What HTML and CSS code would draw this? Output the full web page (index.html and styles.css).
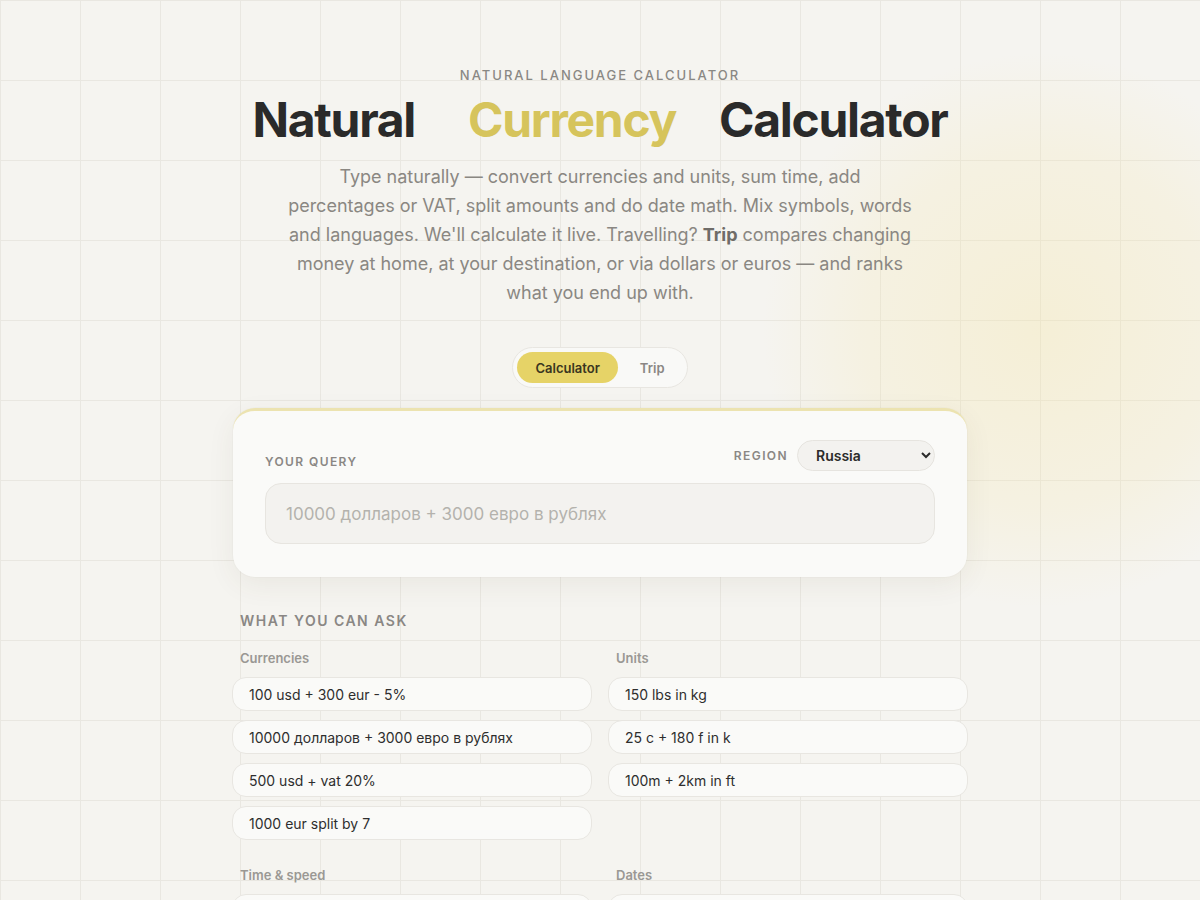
FILE: index.html
```html
<!DOCTYPE html>
<html lang="en">
<head>
<meta charset="utf-8">
<title>Natural Currency Calculator</title>
<link rel="stylesheet" href="styles.css">
</head>
<body>
<div class="glow"></div>
<main class="page">
  <header class="hero">
    <div class="eyebrow">NATURAL LANGUAGE CALCULATOR</div>
    <h1 class="title"><span class="w1">Natural</span><span class="accent">Currency</span><span class="w3">Calculator</span></h1>
    <p class="lead">Type naturally — convert currencies and units, sum time, add percentages or VAT, split amounts and do date math. Mix symbols, words and languages. We'll calculate it live. Travelling? <b>Trip</b> compares changing money at home, at your destination, or via dollars or euros — and ranks what you end up with.</p>
  </header>

  <nav class="tabs">
    <button class="tab active">Calculator</button>
    <button class="tab">Trip</button>
  </nav>

  <section class="card">
    <div class="card-head">
      <label class="label">YOUR QUERY</label>
      <div class="region">
        <span class="label">REGION</span>
        <select class="select"><option>Russia</option></select>
      </div>
    </div>
    <input class="query" type="text" placeholder="10000 долларов + 3000 евро в рублях">
  </section>

  <section class="examples">
    <h2 class="ex-title">WHAT YOU CAN ASK</h2>
    <div class="ex-grid">
      <div class="group">
        <div class="group-label">Currencies</div>
        <div class="chip">100 usd + 300 eur - 5%</div>
        <div class="chip">10000 долларов + 3000 евро в рублях</div>
        <div class="chip">500 usd + vat 20%</div>
        <div class="chip">1000 eur split by 7</div>
      </div>
      <div class="group">
        <div class="group-label">Units</div>
        <div class="chip">150 lbs in kg</div>
        <div class="chip">25 c + 180 f in k</div>
        <div class="chip">100m + 2km in ft</div>
      </div>
      <div class="group">
        <div class="group-label">Time &amp; speed</div>
        <div class="chip">2h 30m + 45m</div>
        <div class="chip">100 km/h in mph</div>
      </div>
      <div class="group">
        <div class="group-label">Dates</div>
        <div class="chip">today + 30 days</div>
        <div class="chip">days until 31 dec</div>
      </div>
    </div>
  </section>
</main>
</body>
</html>
```

FILE: styles.css
```css
* { box-sizing: border-box; }
html { overflow: hidden; height: 900px; }
html, body { margin: 0; padding: 0; }
body {
  font-family: Inter, "Noto Sans", sans-serif;
  color: #2b2b2b;
  background-color: #f5f4f0;
  background-image:
    linear-gradient(to right, #e9e7e1 1px, transparent 1px),
    linear-gradient(to bottom, #e9e7e1 1px, transparent 1px);
  background-size: 80px 80px;
  height: 900px;
  overflow: hidden;
  position: relative;
}
.glow {
  position: absolute;
  left: 760px;
  top: 50px;
  width: 560px;
  height: 560px;
  border-radius: 50%;
  background: radial-gradient(circle, rgba(245,228,160,0.32) 0%, rgba(245,228,160,0.18) 45%, rgba(245,228,160,0) 70%);
  pointer-events: none;
}
.page {
  position: relative;
  width: 736px;
  margin: 0 auto;
  padding-top: 66px;
}
.hero { text-align: center; }
.eyebrow {
  font-size: 13px;
  letter-spacing: 2px;
  color: #8a8884;
  font-weight: 500;
  line-height: 18px;
}
.title {
  margin: 6px 0 0;
  display: flex;
  justify-content: center;
  font-size: 48px;
  font-weight: 700;
  letter-spacing: -1.3px;
  line-height: 60px;
  color: #2a2a2a;
}
.title .w1 { margin-right: 53px; }
.title .w3 { margin-left: 43px; }
.title .accent { color: #d6c45c; }
.lead {
  width: 632px;
  margin: 12px auto 0;
  font-size: 18px;
  line-height: 29px;
  color: #8a8782;
}
.lead b { color: #6f6c68; font-weight: 700; }
.tabs {
  display: flex;
  width: max-content;
  margin: 40px auto 0;
  padding: 4px;
  gap: 4px;
  border: 1px solid #e8e6e1;
  border-radius: 999px;
  background: #f9f9f7;
}
.tab {
  border: none;
  background: transparent;
  font-family: inherit;
  font-size: 13px;
  font-weight: 600;
  color: #8a8784;
  padding: 0 18px;
  height: 31px;
  border-radius: 999px;
}
.tab.active {
  background: #e6d367;
  color: #3a3520;
}
.card {
  margin: 20px 1px 0;
  background: #fafaf8;
  border-radius: 22px;
  border-top: 3px solid #ece3b0;
  padding: 29px 32px 33px;
  box-shadow: 0 8px 28px rgba(80, 70, 40, 0.07), 0 0 0 1px rgba(0,0,0,0.015);
}
.card-head {
  display: flex;
  justify-content: space-between;
  align-items: center;
}
.label {
  font-size: 12px;
  font-weight: 600;
  letter-spacing: 1.4px;
  color: #8a8784;
}
.card-head > .label { margin-top: 12px; }
.region {
  display: flex;
  align-items: center;
  gap: 9px;
}
.select {
  width: 138px;
  height: 31px;
  border-radius: 999px;
  border: 1px solid #e6e4df;
  background: #f3f2ef;
  font-family: inherit;
  font-size: 14px;
  font-weight: 600;
  color: #2b2b2b;
  padding: 0 10px 0 14px;
}
.query {
  display: block;
  width: 100%;
  height: 61px;
  margin-top: 12px;
  border: 1px solid #e7e5e0;
  border-radius: 16px;
  background: #f3f2ef;
  font-family: inherit;
  font-size: 17px;
  padding: 0 20px;
  color: #2b2b2b;
}
.query::placeholder { color: #b4b2ad; }
.examples { margin-top: 35px; }
.ex-title {
  margin: 0 0 0 8px;
  font-size: 14px;
  font-weight: 600;
  letter-spacing: 1.5px;
  color: #8a8784;
  line-height: 18px;
}
.ex-grid {
  display: grid;
  grid-template-columns: 360px 360px;
  column-gap: 16px;
  row-gap: 27px;
  margin-top: 20px;
}
.group {
  display: flex;
  flex-direction: column;
  gap: 9px;
}
.group-label {
  margin: 0 0 2px 8px;
  font-size: 13px;
  font-weight: 600;
  color: #9a9894;
  line-height: 16px;
}
.chip {
  height: 34px;
  display: flex;
  align-items: center;
  padding: 0 16px;
  background: #fafaf8;
  border: 1px solid #e8e6e1;
  border-radius: 14px;
  font-size: 14px;
  color: #2e2e2e;
}
```
